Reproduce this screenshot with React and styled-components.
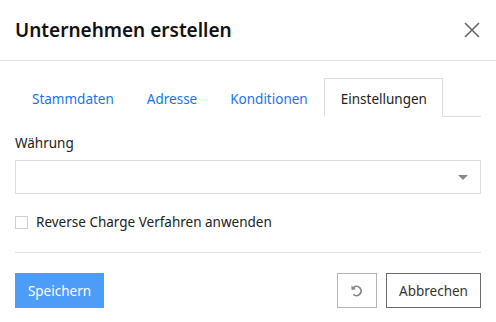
import React from 'react';
import styled, { createGlobalStyle } from 'styled-components';

const Global = createGlobalStyle`
  body {
    margin: 0;
    background: #fff;
    font-family: "Noto Sans", "Open Sans", sans-serif;
    color: #222;
  }
`;

const Modal = styled.div`
  width: 496px;
  height: 322px;
  background: #fff;
  display: flex;
  flex-direction: column;
`;

const Header = styled.div`
  height: 61px;
  box-sizing: border-box;
  border-bottom: 1px solid #dedede;
  display: flex;
  align-items: center;
  justify-content: space-between;
  padding: 0 15px 0 15px;
`;

const Title = styled.h1`
  margin: 0;
  font-size: 19px;
  font-weight: 600;
  color: #111;
`;

const Close = styled.button`
  border: 0;
  background: none;
  padding: 0;
  width: 18px;
  height: 18px;
  display: flex;
  cursor: pointer;
`;

const Body = styled.div`
  padding: 17px 15px 0;
  display: flex;
  flex-direction: column;
`;

const TabBar = styled.div`
  display: flex;
  height: 38px;
  border-bottom: 1px solid #dcdcdc;
`;

const Tab = styled.div`
  box-sizing: border-box;
  padding: 3px 15px 0 16px;
  margin-bottom: -1px;
  display: flex;
  align-items: center;
  font-size: 13.5px;
  color: ${p => (p.$active ? '#222' : '#1a73ee')};
  background: #fff;
  border: 1px solid ${p => (p.$active ? '#dcdcdc' : 'transparent')};
  border-bottom-color: ${p => (p.$active ? '#fff' : 'transparent')};
`;

const Label = styled.div`
  font-size: 13.5px;
  color: #222;
  margin-top: 16px;
  height: 20px;
  line-height: 20px;
`;

const Select = styled.div`
  margin-top: 7px;
  height: 34px;
  box-sizing: border-box;
  border: 1px solid #dcdcdc;
  display: flex;
  align-items: center;
  justify-content: flex-end;
  padding-right: 12px;
`;

const Caret = styled.span`
  width: 0;
  height: 0;
  border-left: 5px solid transparent;
  border-right: 5px solid transparent;
  border-top: 5px solid #888;
`;

const CheckRow = styled.label`
  margin-top: 18px;
  height: 20px;
  display: flex;
  align-items: center;
  gap: 8px;
  font-size: 13.5px;
  color: #222;
`;

const Box = styled.span`
  width: 13px;
  height: 13px;
  box-sizing: border-box;
  border: 1px solid #d0d0d0;
  background: #fff;
`;

const Divider = styled.div`
  margin-top: 20px;
  height: 1px;
  background: #dedede;
`;

const Footer = styled.div`
  margin-top: 20px;
  display: flex;
  align-items: center;
  justify-content: space-between;
`;

const Group = styled.div`
  display: flex;
  gap: 9px;
`;

const Button = styled.button`
  height: 35px;
  min-width: ${p => p.$w || 0}px;
  box-sizing: border-box;
  padding: 0 ${p => (p.$pad || 12)}px;
  font-family: inherit;
  font-size: 13.5px;
  display: flex;
  align-items: center;
  justify-content: center;
  cursor: pointer;
  background: ${p => (p.$primary ? '#4d9cf8' : '#fff')};
  color: ${p => (p.$primary ? '#fff' : '#333')};
  border: 1px solid ${p => (p.$primary ? '#4d9cf8' : p.$muted ? '#b5b5b5' : '#6a6a6a')};
`;

export default function App() {
  return (
    <Modal>
      <Global />
      <Header>
        <Title>Unternehmen erstellen</Title>
        <Close aria-label="Schließen">
          <svg width="18" height="18" viewBox="0 0 18 18">
            <path d="M2 2L16 16M16 2L2 16" stroke="#666" strokeWidth="1.6" />
          </svg>
        </Close>
      </Header>
      <Body>
        <TabBar>
          <Tab>Stammdaten</Tab>
          <Tab>Adresse</Tab>
          <Tab>Konditionen</Tab>
          <Tab $active>Einstellungen</Tab>
        </TabBar>
        <Label>Währung</Label>
        <Select>
          <Caret />
        </Select>
        <CheckRow>
          <Box />
          Reverse Charge Verfahren anwenden
        </CheckRow>
        <Divider />
        <Footer>
          <Button $primary $pad={10} $w={89}>Speichern</Button>
          <Group>
            <Button $muted $pad={0} $w={37} aria-label="Zurücksetzen">
              <svg width="14" height="14" viewBox="0 0 14 14">
                <path d="M3.4 3.6A4.6 4.6 0 1 1 3.4 10.4" fill="none" stroke="#888" strokeWidth="1.8" />
                <path d="M1.4 1.4L1.6 6.0L6.0 5.2Z" fill="#888" />
              </svg>
            </Button>
            <Button $pad={12} $w={95}>Abbrechen</Button>
          </Group>
        </Footer>
      </Body>
    </Modal>
  );
}
